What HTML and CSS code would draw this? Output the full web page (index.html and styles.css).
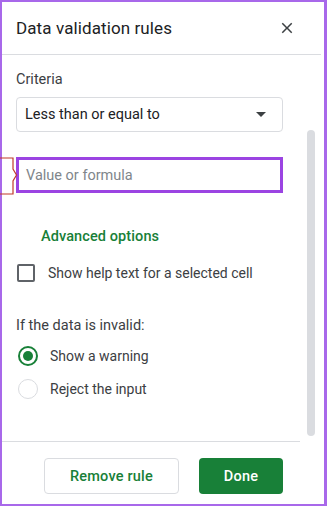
FILE: index.html
```html
<!DOCTYPE html>
<html lang="en">
<head>
  <meta charset="UTF-8">
  <meta name="viewport" content="width=device-width, initial-scale=1.0">
  <title>Data validation rules</title>
  <link rel="stylesheet" href="styles.css">
</head>
<body>
  <div class="frame">
    <div class="header">
      <h1>Data validation rules</h1>
      <button class="close-btn" aria-label="Close">
        <svg width="18" height="18" viewBox="0 0 24 24"><path d="M19 6.41 17.59 5 12 10.59 6.41 5 5 6.41 10.59 12 5 17.59 6.41 19 12 13.41 17.59 19 19 17.59 13.41 12z" fill="#3c4043"/></svg>
      </button>
    </div>

    <div class="main">
      <div class="content">
        <div class="label">Criteria</div>
        <div class="select">
          <span>Less than or equal to</span>
          <svg class="caret" width="10" height="5" viewBox="0 0 10 5"><path d="M0 0h10L5 5z" fill="#3c4043"/></svg>
        </div>
        <div class="input-wrap">
          <div class="value-input">Value or formula</div>
        </div>
        <div class="advanced">Advanced options</div>
        <div class="check-row">
          <span class="checkbox"></span>
          <span>Show help text for a selected cell</span>
        </div>
        <div class="label invalid">If the data is invalid:</div>
        <div class="radio-row first">
          <span class="radio checked"></span>
          <span>Show a warning</span>
        </div>
        <div class="radio-row">
          <span class="radio"></span>
          <span>Reject the input</span>
        </div>
      </div>
      <div class="scroll">
        <div class="thumb"></div>
      </div>
    </div>

    <div class="footer">
      <button class="remove-btn">Remove rule</button>
      <button class="done-btn">Done</button>
    </div>

    <!-- annotation marker pointing at the value field -->
    <svg class="marker" width="18" height="38" viewBox="0 0 18 38"><path d="M0 1H13V12L16.5 18L13 24V37H0" fill="none" stroke="#c0392b" stroke-width="1.2"/></svg>
  </div>
</body>
</html>
```

FILE: styles.css
```css
/* Side panel: data validation rules */
body {
  font-family: Roboto, "Noto Sans", Arial, sans-serif;
  margin: 0;
  padding: 0;
  background: #fff;
  overflow: hidden;
}
.frame {
  position: relative;
  width: 327px;
  height: 506px;
  border: 2px solid #a868ea;
  border-right-width: 3px;
  box-sizing: border-box;
  display: flex;
  flex-direction: column;
}
.header {
  height: 53px;
  width: 319px;
  box-sizing: border-box;
  border-bottom: 1px solid #dadce0;
  display: flex;
  align-items: center;
  justify-content: space-between;
  padding-left: 14px;
  padding-right: 25px;
}
.header h1 {
  margin: 0;
  font-size: 17px;
  font-weight: 400;
  color: #202124;
  letter-spacing: 0.1px;
}
.close-btn {
  background: none;
  border: none;
  padding: 0;
  width: 18px;
  height: 18px;
  cursor: pointer;
}
.close-btn svg {
  display: block;
}
.main {
  height: 386px;
  display: flex;
}
.content {
  width: 267px;
  margin-left: 14px;
  padding-top: 15px;
  font-size: 14px;
  color: #3c4043;
}
.label {
  line-height: 20px;
  height: 20px;
  font-size: 14.5px;
}
.select {
  margin-top: 7px;
  height: 35px;
  border: 1px solid #dadce0;
  border-radius: 4px;
  box-sizing: border-box;
  display: flex;
  align-items: center;
  justify-content: space-between;
  padding: 0 16px 0 8px;
  color: #202124;
  font-size: 14.5px;
}
.caret {
  display: block;
}
.input-wrap {
  margin-top: 25px;
}
.value-input {
  height: 36px;
  border: 3px solid #9b44e2;
  box-sizing: border-box;
  display: flex;
  align-items: center;
  padding-left: 7px;
  color: #80868b;
  font-size: 14.5px;
}
.advanced {
  margin-top: 34px;
  padding-left: 25px;
  line-height: 20px;
  color: #188038;
  font-weight: 500;
  font-size: 14.5px;
  letter-spacing: 0.1px;
}
.check-row {
  margin-top: 16px;
  height: 20px;
  display: flex;
  align-items: center;
  gap: 13px;
}
.checkbox {
  width: 18px;
  height: 18px;
  margin-left: 1px;
  border: 2px solid #5f6368;
  border-radius: 2px;
  box-sizing: border-box;
}
.invalid {
  margin-top: 33px;
}
.radio-row {
  margin-top: 13px;
  height: 20px;
  display: flex;
  align-items: center;
  gap: 12px;
}
.radio-row.first {
  margin-top: 10px;
}
.radio {
  width: 20px;
  height: 20px;
  margin-left: 2px;
  border: 1px solid #dadce0;
  border-radius: 50%;
  box-sizing: border-box;
  display: flex;
  align-items: center;
  justify-content: center;
}
.radio.checked {
  border: 2px solid #188038;
}
.radio.checked::after {
  content: "";
  width: 10px;
  height: 10px;
  border-radius: 50%;
  background: #188038;
}
.scroll {
  margin-left: 24px;
  padding-top: 75px;
}
.thumb {
  width: 8px;
  height: 306px;
  border-radius: 4px;
  background: #dadce0;
}
.footer {
  width: 298px;
  border-top: 1px solid #dadce0;
  display: flex;
  justify-content: flex-end;
  gap: 20px;
  padding: 16px 0 0 0;
  box-sizing: border-box;
  padding-right: 17px;
}
.footer button {
  height: 36px;
  border-radius: 4px;
  font-family: Roboto, "Noto Sans", Arial, sans-serif;
  font-size: 14.5px;
  font-weight: 500;
  letter-spacing: 0.2px;
  cursor: pointer;
}
.remove-btn {
  width: 135px;
  background: #fff;
  border: 1px solid #dadce0;
  color: #188038;
}
.done-btn {
  width: 84px;
  background: #188038;
  border: none;
  color: #fff;
}
.marker {
  position: absolute;
  left: -2px;
  top: 155px;
}
```
